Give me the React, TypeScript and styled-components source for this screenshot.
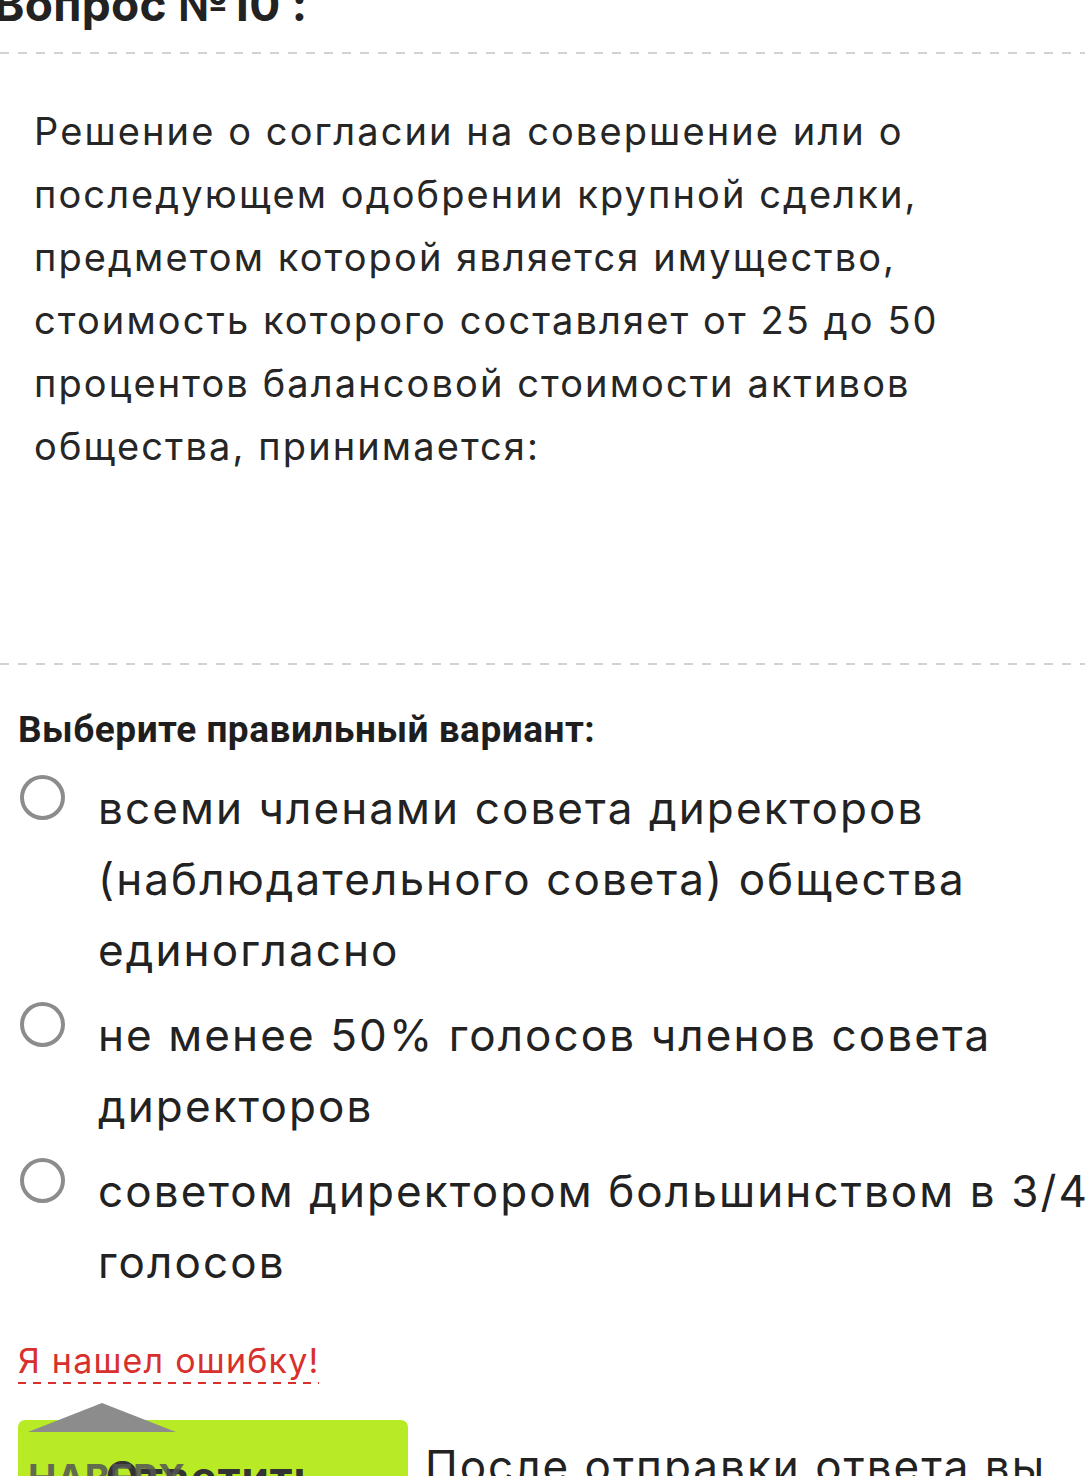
import React from 'react'
import styled, { createGlobalStyle } from 'styled-components'

const GlobalStyle = createGlobalStyle`
  html, body {
    margin: 0;
    padding: 0;
    background: #fff;
    overflow: hidden;
  }
  body {
    font-family: Inter, Roboto, "Liberation Sans", Arial, sans-serif;
    color: #222;
  }
`

const options = [
  'всеми членами совета директоров (наблюдательного совета) общества единогласно',
  'не менее 50% голосов членов совета директоров',
  'советом директором большинством в 3/4 голосов',
]

const App = () => {
  return (
    <Page>
      <GlobalStyle />
      <Heading>Вопрос №10 :</Heading>
      <Dashed />
      <Question>
        Решение о согласии на совершение или о последующем одобрении крупной сделки,
        предметом которой является имущество, стоимость которого составляет от 25 до 50
        процентов балансовой стоимости активов общества, принимается:
      </Question>
      <Dashed />
      <Answers>
        <Prompt>Выберите правильный вариант:</Prompt>
        <OptionList>
          {options.map((o) => (
            <Option key={o}>
              <Radio />
              <OptionText>{o}</OptionText>
            </Option>
          ))}
        </OptionList>
        <ErrorLink>Я нашел ошибку!</ErrorLink>
        <Footer>
          <SubmitButton>Ответить</SubmitButton>
          <Note>После отправки ответа вы увидите правильный вариант</Note>
        </Footer>
      </Answers>
      <ToTop>
        <Arrow />
        <ToTopLabel>Наверх</ToTopLabel>
      </ToTop>
    </Page>
  )
}
export default App

const Page = styled.div`
  position: relative;
  width: 1085px;
  height: 1476px;
  overflow: hidden;
`

const Heading = styled.h2`
  margin: -25px 0 19px -6px;
  font-size: 46px;
  line-height: 58px;
  font-weight: 700;
  letter-spacing: 0.3px;
  color: #222;
  white-space: nowrap;
`

const Dashed = styled.div`
  height: 2px;
  background-image: repeating-linear-gradient(
    to right,
    #d2d2d2 0,
    #d2d2d2 9px,
    transparent 9px,
    transparent 18px
  );
`

const Question = styled.div`
  padding: 46px 90px 0 34px;
  min-height: 609px;
  box-sizing: border-box;
  font-size: 38px;
  line-height: 63px;
  letter-spacing: 2.1px;
  color: #262626;
`

const Answers = styled.div`
  padding: 43px 0 0 18px;
`

const Prompt = styled.div`
  font-family: Roboto, sans-serif;
  font-weight: 700;
  font-size: 37px;
  line-height: 44px;
  letter-spacing: 0.5px;
  color: #1e1e1e;
`

const OptionList = styled.div`
  display: flex;
  flex-direction: column;
  gap: 14px;
  margin-top: 21px;
`

const Option = styled.div`
  display: flex;
  align-items: flex-start;
`

const Radio = styled.span`
  flex: none;
  width: 45px;
  height: 45px;
  margin: 2px 0 0 2px;
  border: 4px solid #8c8c8c;
  border-radius: 50%;
  box-sizing: border-box;
`

const OptionText = styled.div`
  flex: none;
  width: 1010px;
  margin-left: 33px;
  font-size: 44px;
  line-height: 71px;
  letter-spacing: 2.1px;
  color: #222;
`

const ErrorLink = styled.span`
  display: inline-block;
  margin-top: 42px;
  padding-bottom: 2px;
  font-size: 34px;
  line-height: 42px;
  letter-spacing: 1.2px;
  color: #d8302c;
  background-image: repeating-linear-gradient(
    to right,
    #d8302c 0,
    #d8302c 8px,
    transparent 8px,
    transparent 15px
  );
  background-size: 100% 2px;
  background-position: 0 100%;
  background-repeat: no-repeat;
`

const Footer = styled.div`
  display: flex;
  align-items: flex-start;
  gap: 17px;
  margin-top: 36px;
`

const SubmitButton = styled.button`
  flex: none;
  width: 390px;
  height: 90px;
  padding: 24px 0 0;
  border: none;
  border-radius: 7px;
  background: #b8eb26;
  font-family: Inter, Roboto, sans-serif;
  font-weight: 700;
  font-size: 44px;
  line-height: 52px;
  letter-spacing: 1px;
  color: #333;
  text-align: center;
  vertical-align: top;
`

const Note = styled.div`
  padding-top: 16px;
  font-size: 44px;
  line-height: 60px;
  letter-spacing: 2px;
  color: #222;
  width: 640px;
`

const ToTop = styled.div`
  position: absolute;
  left: 28px;
  top: 1403px;
  display: flex;
  flex-direction: column;
  align-items: flex-start;
`

const Arrow = styled.div`
  width: 0;
  height: 0;
  border-left: 74px solid transparent;
  border-right: 74px solid transparent;
  border-bottom: 29px solid #8c8c8c;
`

const ToTopLabel = styled.div`
  margin-top: 26px;
  font-weight: 700;
  font-size: 38px;
  line-height: 40px;
  text-transform: uppercase;
  color: #555;
  opacity: 0.85;
`
